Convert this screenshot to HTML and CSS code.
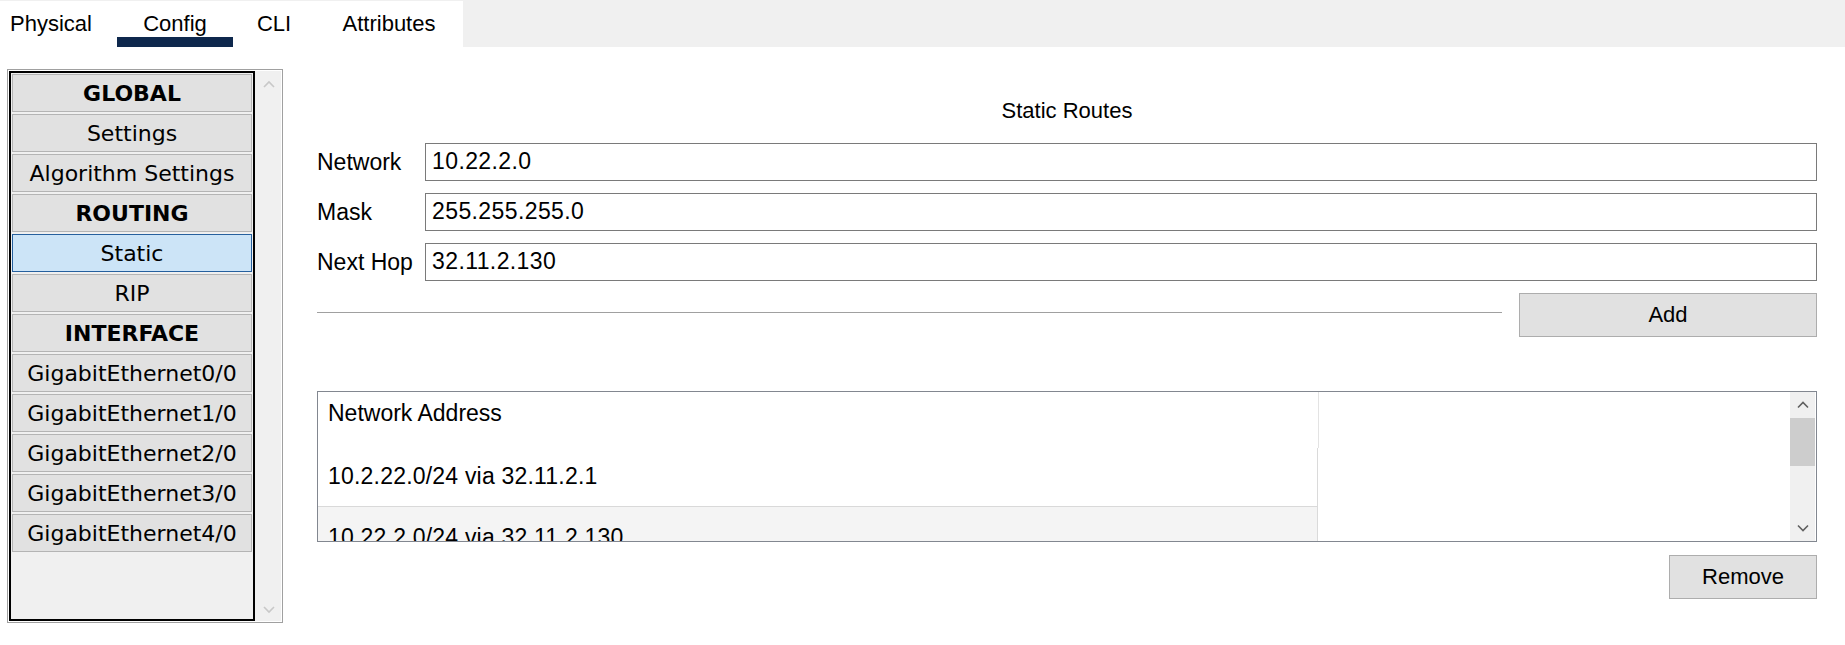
FILE: index.html
```html
<!DOCTYPE html>
<html>
<head>
<meta charset="utf-8">
<link rel="stylesheet" href="styles.css">
</head>
<body>
<div class="tabbar">
  <div class="tabs">
    <div class="tab tab-physical">Physical</div>
    <div class="tab tab-config active">Config</div>
    <div class="tab tab-cli">CLI</div>
    <div class="tab tab-attr">Attributes</div>
  </div>
</div>
<div class="main">
  <div class="sidebar">
    <div class="menu">
      <div class="item head">GLOBAL</div>
      <div class="item">Settings</div>
      <div class="item">Algorithm Settings</div>
      <div class="item head">ROUTING</div>
      <div class="item selected">Static</div>
      <div class="item">RIP</div>
      <div class="item head">INTERFACE</div>
      <div class="item">GigabitEthernet0/0</div>
      <div class="item">GigabitEthernet1/0</div>
      <div class="item">GigabitEthernet2/0</div>
      <div class="item">GigabitEthernet3/0</div>
      <div class="item">GigabitEthernet4/0</div>
    </div>
    <div class="vscroll">
      <svg class="chev light" width="12" height="8" viewBox="0 0 12 8"><polyline points="1,7 6,2 11,7" fill="none" stroke="#c8c8c8" stroke-width="1.6"/></svg>
      <svg class="chev light" width="12" height="8" viewBox="0 0 12 8"><polyline points="1,1 6,6 11,1" fill="none" stroke="#c8c8c8" stroke-width="1.6"/></svg>
    </div>
  </div>
  <div class="content">
    <div class="title">Static Routes</div>
    <div class="field">
      <div class="label">Network</div>
      <div class="input">10.22.2.0</div>
    </div>
    <div class="field">
      <div class="label">Mask</div>
      <div class="input">255.255.255.0</div>
    </div>
    <div class="field">
      <div class="label">Next Hop</div>
      <div class="input">32.11.2.130</div>
    </div>
    <div class="addrow">
      <div class="sep"></div>
      <div class="btn btn-add">Add</div>
    </div>
    <div class="table">
      <div class="tbody">
        <div class="th">Network Address</div>
        <div class="tr">10.2.22.0/24 via 32.11.2.1</div>
        <div class="tr alt">10.22.2.0/24 via 32.11.2.130</div>
      </div>
      <div class="tscroll">
        <div class="arrow">
          <svg width="12" height="8" viewBox="0 0 12 8"><polyline points="1,6.5 6,1.5 11,6.5" fill="none" stroke="#606060" stroke-width="1.6"/></svg>
        </div>
        <div class="thumb"></div>
        <div class="track"></div>
        <div class="arrow">
          <svg width="12" height="8" viewBox="0 0 12 8"><polyline points="1,1.5 6,6.5 11,1.5" fill="none" stroke="#606060" stroke-width="1.6"/></svg>
        </div>
      </div>
    </div>
    <div class="actions">
      <div class="btn btn-remove">Remove</div>
    </div>
  </div>
</div>
</body>
</html>
```

FILE: styles.css
```css
* { box-sizing: border-box; }

html, body {
  margin: 0;
  padding: 0;
  background: #ffffff;
  color: #000000;
  font-family: "Liberation Sans", Arial, sans-serif;
}

body {
  width: 1845px;
  height: 645px;
  overflow: hidden;
}

/* ---------- tabs ---------- */
.tabbar {
  height: 47px;
  background: #f0f0f0;
  padding-top: 1px;
}

.tabs {
  display: flex;
  width: 463px;
  height: 46px;
  background: #ffffff;
}

.tab {
  height: 46px;
  padding-top: 10px;
  font-size: 22px;
  line-height: 25px;
  text-align: center;
  color: #000;
}

.tab-physical { width: 117px; text-align: left; padding-left: 10px; }
.tab-config { width: 116px; }
.tab-cli { width: 82px; }
.tab-attr { width: 148px; }

.tab.active {
  border-bottom: 10px solid #0e284d;
}

/* ---------- layout ---------- */
.main {
  display: flex;
  align-items: flex-start;
}

/* ---------- sidebar ---------- */
.sidebar {
  display: flex;
  margin-left: 7px;
  margin-top: 22px;
  width: 276px;
  height: 554px;
  border: 1px solid #a0a0a0;
  padding: 1px;
  background: #ffffff;
}

.menu {
  width: 246px;
  height: 550px;
  border: 2px solid #000000;
  padding: 1px;
  background: #f0f0f0;
  font-family: "DejaVu Sans", Verdana, sans-serif;
  font-size: 22px;
}

.item {
  height: 38px;
  margin-bottom: 2px;
  border: 1px solid #b4b4b4;
  background: #e1e1e1;
  text-align: center;
  line-height: 34px;
  padding-top: 2px;
  white-space: nowrap;
}

.item.head { font-weight: bold; }

.item.selected {
  background: #cce4f7;
  border-color: #26609e;
}

.vscroll {
  width: 26px;
  height: 550px;
  background: #f0f0f0;
  display: flex;
  flex-direction: column;
  justify-content: space-between;
  align-items: center;
  padding: 9px 0 7px 1px;
}

.chev { display: block; }

/* ---------- content ---------- */
.content {
  flex: 1;
  margin-left: 34px;
  margin-right: 28px;
  padding-top: 51px;
  font-size: 23px;
}

.title {
  text-align: center;
  font-size: 22px;
  line-height: 26px;
  margin-bottom: 19px;
}

.field {
  display: flex;
  align-items: center;
  height: 38px;
  margin-bottom: 12px;
}

.label {
  width: 108px;
  flex: none;
  line-height: 26px;
}

.input {
  flex: 1;
  height: 38px;
  border: 1px solid #7a7a7a;
  padding: 0 0 2px 6px;
  line-height: 34px;
  background: #ffffff;
  letter-spacing: 0.4px;
}

.addrow {
  display: flex;
  align-items: flex-start;
  gap: 17px;
  margin-top: 1px;
  height: 44px;
}

.sep {
  flex: 1;
  height: 1px;
  margin-top: 19px;
  background: #a0a0a0;
}

.btn {
  height: 44px;
  border: 1px solid #adadad;
  background: #e1e1e1;
  font-size: 22px;
  line-height: 42px;
  text-align: center;
}

.btn-add { width: 298px; flex: none; }
.btn-remove { width: 148px; }

/* ---------- table ---------- */
.table {
  display: flex;
  margin-top: 54px;
  height: 151px;
  border: 1px solid #828790;
  background: #ffffff;
}

.tbody {
  width: 1001px;
  height: 149px;
  overflow: hidden;
}

.th {
  height: 56px;
  padding: 8px 0 0 10px;
  line-height: 26px;
  border-right: 1px solid #e3e3e3;
}

.tr {
  width: 1000px;
  height: 59px;
  padding: 15px 0 0 10px;
  line-height: 26px;
  border-right: 1px solid #dadada;
  border-bottom: 1px solid #d9d9d9;
  letter-spacing: 0.2px;
}

.tr.alt {
  background: #f4f4f4;
  padding-top: 17px;
  border-bottom: none;
}

.tscroll {
  margin-left: auto;
  margin-right: 1px;
  width: 25px;
  height: 149px;
  background: #f0f0f0;
  display: flex;
  flex-direction: column;
}

.tscroll .arrow {
  height: 26px;
  display: flex;
  align-items: center;
  justify-content: center;
}

.tscroll .thumb {
  height: 48px;
  background: #cdcdcd;
}

.tscroll .track { flex: 1; }

.actions {
  display: flex;
  justify-content: flex-end;
  margin-top: 13px;
}
```
